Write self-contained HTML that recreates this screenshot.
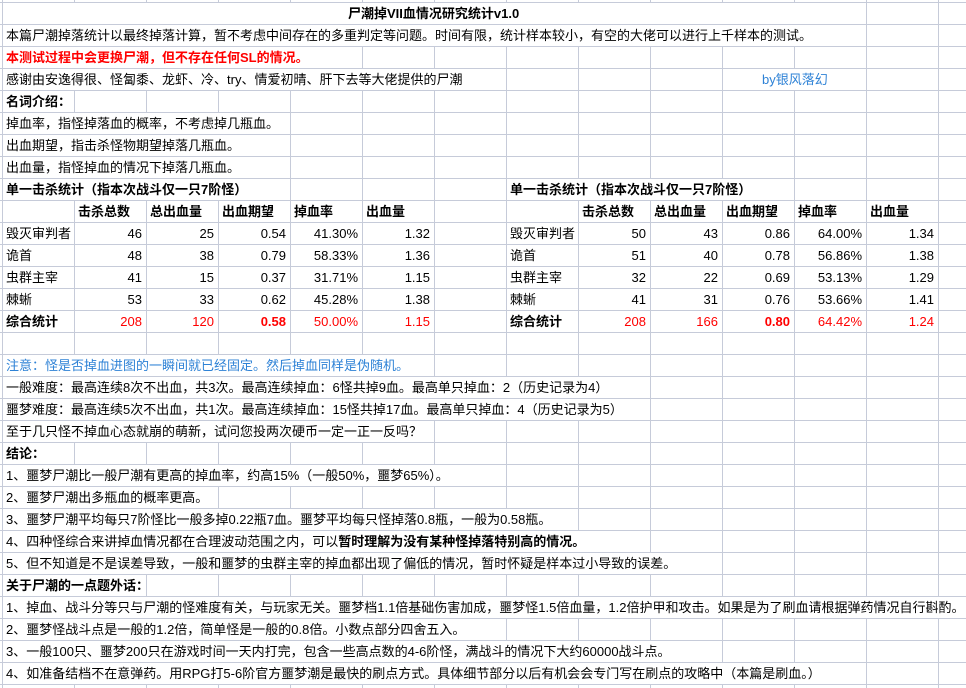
<!DOCTYPE html>
<html><head><meta charset="utf-8"><style>
html,body{margin:0;padding:0}
body{width:966px;height:688px;overflow:hidden;position:relative;background:#fff;
background-image:linear-gradient(to right,#c6cbd9 1px,transparent 1px),linear-gradient(to bottom,#c6cbd9 1px,transparent 1px);
background-size:72px 22px;background-position:2px 2px;
font-family:"Liberation Sans","Noto Sans CJK SC",sans-serif;font-size:13px;color:#000}
.t{position:absolute;height:21px;line-height:21px;white-space:nowrap;background:#fff;padding-left:3px;box-sizing:border-box;overflow:visible}
.n{position:absolute;height:21px;line-height:21px;width:71px;text-align:right;padding-right:4px;box-sizing:border-box;white-space:nowrap;background:#fff}
.h{position:absolute;height:21px;line-height:21px;width:71px;padding-left:3px;box-sizing:border-box;white-space:nowrap;font-weight:bold;background:#fff}
b{font-weight:bold}
.r{color:#ff0000}
.bl{color:#2e82d6}
</style></head><body>
<!-- row 0 title -->
<div class="t" style="left:3px;top:3px;width:863px;padding-left:345px;font-weight:bold">尸潮掉VII血情况研究统计v1.0</div>
<div class="t" style="left:3px;top:25px;width:863px">本篇尸潮掉落统计以最终掉落计算，暂不考虑中间存在的多重判定等问题。时间有限，统计样本较小，有空的大佬可以进行上千样本的测试。</div>
<div class="t r" style="left:3px;top:47px;width:359px;font-weight:bold">本测试过程中会更换尸潮，但不存在任何SL的情况。</div>
<div class="t" style="left:3px;top:69px;width:503px">感谢由安逸得很、怪匐黍、龙虾、冷、try、情爱初晴、肝下去等大佬提供的尸潮</div>
<div class="t bl" style="left:723px;top:69px;width:143px;padding-left:39px">by银风落幻</div>
<div class="t" style="left:3px;top:91px;width:71px;font-weight:bold">名词介绍：</div>
<div class="t" style="left:3px;top:113px;width:287px">掉血率，指怪掉落血的概率，不考虑掉几瓶血。</div>
<div class="t" style="left:3px;top:135px;width:287px">出血期望，指击杀怪物期望掉落几瓶血。</div>
<div class="t" style="left:3px;top:157px;width:287px">出血量，指怪掉血的情况下掉落几瓶血。</div>
<div class="t" style="left:3px;top:179px;width:287px;font-weight:bold">单一击杀统计（指本次战斗仅一只7阶怪）</div>
<div class="t" style="left:507px;top:179px;width:287px;font-weight:bold">单一击杀统计（指本次战斗仅一只7阶怪）</div>

<!-- left table headers -->
<div class="h" style="left:75px;top:201px">击杀总数</div>
<div class="h" style="left:147px;top:201px">总出血量</div>
<div class="h" style="left:219px;top:201px">出血期望</div>
<div class="h" style="left:291px;top:201px">掉血率</div>
<div class="h" style="left:363px;top:201px">出血量</div>
<div class="h" style="left:579px;top:201px">击杀总数</div>
<div class="h" style="left:651px;top:201px">总出血量</div>
<div class="h" style="left:723px;top:201px">出血期望</div>
<div class="h" style="left:795px;top:201px">掉血率</div>
<div class="h" style="left:867px;top:201px">出血量</div>

<!-- left data -->
<div class="t" style="left:3px;top:223px;width:71px">毁灭审判者</div>
<div class="n" style="left:75px;top:223px">46</div><div class="n" style="left:147px;top:223px">25</div><div class="n" style="left:219px;top:223px">0.54</div><div class="n" style="left:291px;top:223px">41.30%</div><div class="n" style="left:363px;top:223px">1.32</div>
<div class="t" style="left:3px;top:245px;width:71px">诡首</div>
<div class="n" style="left:75px;top:245px">48</div><div class="n" style="left:147px;top:245px">38</div><div class="n" style="left:219px;top:245px">0.79</div><div class="n" style="left:291px;top:245px">58.33%</div><div class="n" style="left:363px;top:245px">1.36</div>
<div class="t" style="left:3px;top:267px;width:71px">虫群主宰</div>
<div class="n" style="left:75px;top:267px">41</div><div class="n" style="left:147px;top:267px">15</div><div class="n" style="left:219px;top:267px">0.37</div><div class="n" style="left:291px;top:267px">31.71%</div><div class="n" style="left:363px;top:267px">1.15</div>
<div class="t" style="left:3px;top:289px;width:71px">棘蜥</div>
<div class="n" style="left:75px;top:289px">53</div><div class="n" style="left:147px;top:289px">33</div><div class="n" style="left:219px;top:289px">0.62</div><div class="n" style="left:291px;top:289px">45.28%</div><div class="n" style="left:363px;top:289px">1.38</div>
<div class="t" style="left:3px;top:311px;width:71px;font-weight:bold">综合统计</div>
<div class="n r" style="left:75px;top:311px">208</div><div class="n r" style="left:147px;top:311px">120</div><div class="n r" style="left:219px;top:311px;font-weight:bold">0.58</div><div class="n r" style="left:291px;top:311px">50.00%</div><div class="n r" style="left:363px;top:311px">1.15</div>

<!-- right data -->
<div class="t" style="left:507px;top:223px;width:71px">毁灭审判者</div>
<div class="n" style="left:579px;top:223px">50</div><div class="n" style="left:651px;top:223px">43</div><div class="n" style="left:723px;top:223px">0.86</div><div class="n" style="left:795px;top:223px">64.00%</div><div class="n" style="left:867px;top:223px">1.34</div>
<div class="t" style="left:507px;top:245px;width:71px">诡首</div>
<div class="n" style="left:579px;top:245px">51</div><div class="n" style="left:651px;top:245px">40</div><div class="n" style="left:723px;top:245px">0.78</div><div class="n" style="left:795px;top:245px">56.86%</div><div class="n" style="left:867px;top:245px">1.38</div>
<div class="t" style="left:507px;top:267px;width:71px">虫群主宰</div>
<div class="n" style="left:579px;top:267px">32</div><div class="n" style="left:651px;top:267px">22</div><div class="n" style="left:723px;top:267px">0.69</div><div class="n" style="left:795px;top:267px">53.13%</div><div class="n" style="left:867px;top:267px">1.29</div>
<div class="t" style="left:507px;top:289px;width:71px">棘蜥</div>
<div class="n" style="left:579px;top:289px">41</div><div class="n" style="left:651px;top:289px">31</div><div class="n" style="left:723px;top:289px">0.76</div><div class="n" style="left:795px;top:289px">53.66%</div><div class="n" style="left:867px;top:289px">1.41</div>
<div class="t" style="left:507px;top:311px;width:71px;font-weight:bold">综合统计</div>
<div class="n r" style="left:579px;top:311px">208</div><div class="n r" style="left:651px;top:311px">166</div><div class="n r" style="left:723px;top:311px;font-weight:bold">0.80</div><div class="n r" style="left:795px;top:311px">64.42%</div><div class="n r" style="left:867px;top:311px">1.24</div>

<!-- notes -->
<div class="t bl" style="left:3px;top:355px;width:431px">注意：怪是否掉血进图的一瞬间就已经固定。然后掉血同样是伪随机。</div>
<div class="t" style="left:3px;top:377px;width:647px">一般难度：最高连续8次不出血，共3次。最高连续掉血：6怪共掉9血。最高单只掉血：2（历史记录为4）</div>
<div class="t" style="left:3px;top:399px;width:647px">噩梦难度：最高连续5次不出血，共1次。最高连续掉血：15怪共掉17血。最高单只掉血：4（历史记录为5）</div>
<div class="t" style="left:3px;top:421px;width:431px">至于几只怪不掉血心态就崩的萌新，试问您投两次硬币一定一正一反吗？</div>
<div class="t" style="left:3px;top:443px;width:71px;font-weight:bold">结论：</div>
<div class="t" style="left:3px;top:465px;width:503px">1、噩梦尸潮比一般尸潮有更高的掉血率，约高15%（一般50%，噩梦65%）。</div>
<div class="t" style="left:3px;top:487px;width:215px">2、噩梦尸潮出多瓶血的概率更高。</div>
<div class="t" style="left:3px;top:509px;width:575px">3、噩梦尸潮平均每只7阶怪比一般多掉0.22瓶7血。噩梦平均每只怪掉落0.8瓶，一般为0.58瓶。</div>
<div class="t" style="left:3px;top:531px;width:647px">4、四种怪综合来讲掉血情况都在合理波动范围之内，可以<b>暂时理解为没有某种怪掉落特别高的情况。</b></div>
<div class="t" style="left:3px;top:553px;width:719px">5、但不知道是不是误差导致，一般和噩梦的虫群主宰的掉血都出现了偏低的情况，暂时怀疑是样本过小导致的误差。</div>
<div class="t" style="left:3px;top:575px;width:143px;font-weight:bold">关于尸潮的一点题外话：</div>
<div class="t" style="left:3px;top:597px;width:963px">1、掉血、战斗分等只与尸潮的怪难度有关，与玩家无关。噩梦档1.1倍基础伤害加成，噩梦怪1.5倍血量，1.2倍护甲和攻击。如果是为了刷血请根据弹药情况自行斟酌。</div>
<div class="t" style="left:3px;top:619px;width:503px">2、噩梦怪战斗点是一般的1.2倍，简单怪是一般的0.8倍。小数点部分四舍五入。</div>
<div class="t" style="left:3px;top:641px;width:719px">3、一般100只、噩梦200只在游戏时间一天内打完，包含一些高点数的4-6阶怪，满战斗的情况下大约60000战斗点。</div>
<div class="t" style="left:3px;top:663px;width:863px">4、如准备结档不在意弹药。用RPG打5-6阶官方噩梦潮是最快的刷点方式。具体细节部分以后有机会会专门写在刷点的攻略中（本篇是刷血。）</div>
</body></html>
